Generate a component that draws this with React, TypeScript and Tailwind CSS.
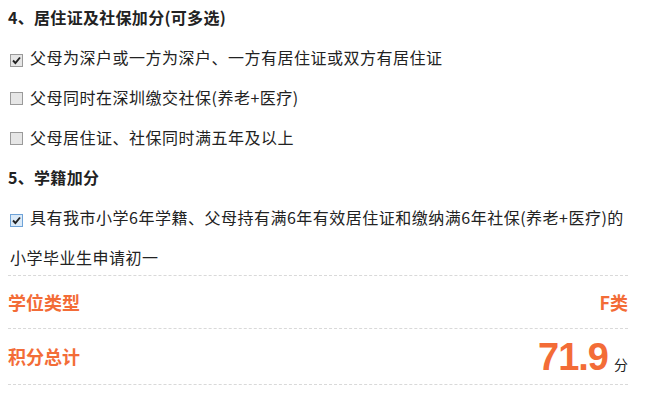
import React from "react";

const font = {
  fontFamily: '"Noto Sans CJK SC", "Noto Sans", sans-serif',
};

function Box({ checked, focus }: { checked?: boolean; focus?: boolean }) {
  return (
    <span
      className={`inline-flex items-center justify-center w-[13px] h-[13px] border align-[-1px] mr-[7px] ${
        focus
          ? "border-[#6fa3d8] bg-[#dbeaf8]"
          : "border-[#9a9a9a] bg-[#e6e6e6]"
      }`}
    >
      {checked && (
        <svg width="9" height="9" viewBox="0 0 9 9">
          <path
            d="M1 4.5 L3.4 7 L8 1.5"
            fill="none"
            stroke="#222"
            strokeWidth="1.9"
          />
        </svg>
      )}
    </span>
  );
}

function Option({
  checked,
  focus,
  children,
}: {
  checked?: boolean;
  focus?: boolean;
  children: React.ReactNode;
}) {
  return (
    <p className="pl-[2px] text-[16px] leading-[40px] tracking-[0.5px] text-[#222]">
      <Box checked={checked} focus={focus} />
      {children}
    </p>
  );
}

export default function App() {
  return (
    <div className="bg-white w-[650px] h-[396px] overflow-hidden px-2" style={font}>
      <div className="w-[620px]">
        <h3 className="text-[16px] font-bold leading-[40px] tracking-[0.3px] text-[#222] -mt-[3px]">
          4、居住证及社保加分(可多选)
        </h3>
        <Option checked>父母为深户或一方为深户、一方有居住证或双方有居住证</Option>
        <Option>父母同时在深圳缴交社保(养老+医疗)</Option>
        <Option>父母居住证、社保同时满五年及以上</Option>

        <h3 className="text-[16px] font-bold leading-[40px] tracking-[0.3px] text-[#222]">5、学籍加分</h3>
        <Option checked focus>
          具有我市小学6年学籍、父母持有满6年有效居住证和缴纳满6年社保(养老+医疗)的小学毕业生申请初一
        </Option>

        <div className="border-t border-dashed border-[#d9d9d9] mt-[-2px]">
          <div className="flex items-center justify-between h-[53px] border-b border-dashed border-[#d9d9d9] text-[#f36c37] text-[18px] font-bold">
            <span>学位类型</span>
            <span>F类</span>
          </div>
          <div className="flex items-center justify-between h-[56px] border-b border-dashed border-[#d9d9d9]">
            <span className="text-[#f36c37] text-[18px] font-bold">积分总计</span>
            <span className="flex items-baseline">
              <span
                className="text-[#f36c37] text-[38px] font-bold leading-none tracking-[-1px]"
                style={{ fontFamily: '"Liberation Sans", Arial, sans-serif' }}
              >
                71.9
              </span>
              <span className="text-[14px] text-[#222] ml-[6px]">分</span>
            </span>
          </div>
        </div>
      </div>
    </div>
  );
}
